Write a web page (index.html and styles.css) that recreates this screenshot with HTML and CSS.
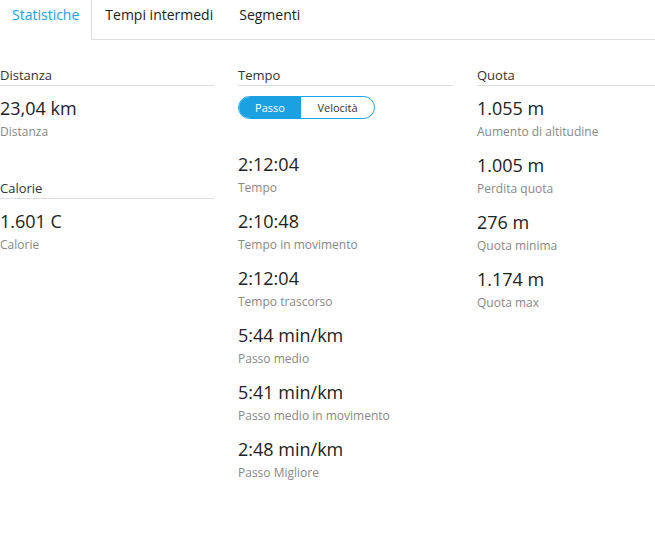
FILE: index.html
```html
<!DOCTYPE html>
<html lang="it">

<head>
    <meta charset="UTF-8">
    <title>Statistiche</title>
    <link rel="stylesheet" href="styles.css">
</head>

<body>
    <div id="tabs">
        <a href="javascript:void(0);" class="active">Statistiche</a>
        <a href="javascript:void(0);">Tempi intermedi</a>
        <a href="javascript:void(0);">Segmenti</a>
        <span class="rest"></span>
    </div>
    <div id="stats">
        <div class="col">
            <div class="group">
                <h3>Distanza</h3>
                <div class="item"><strong>23,04 km</strong><span>Distanza</span></div>
            </div>
            <div class="group">
                <h3>Calorie</h3>
                <div class="item"><strong>1.601 C</strong><span>Calorie</span></div>
            </div>
        </div>
        <div class="col">
            <div class="group">
                <h3>Tempo</h3>
                <div class="toggle">
                    <a href="javascript:void(0);" class="on">Passo</a>
                    <a href="javascript:void(0);">Velocità</a>
                </div>
                <div class="item"><strong>2:12:04</strong><span>Tempo</span></div>
                <div class="item"><strong>2:10:48</strong><span>Tempo in movimento</span></div>
                <div class="item"><strong>2:12:04</strong><span>Tempo trascorso</span></div>
                <div class="item"><strong>5:44 min/km</strong><span>Passo medio</span></div>
                <div class="item"><strong>5:41 min/km</strong><span>Passo medio in movimento</span></div>
                <div class="item"><strong>2:48 min/km</strong><span>Passo Migliore</span></div>
            </div>
        </div>
        <div class="col">
            <div class="group">
                <h3>Quota</h3>
                <div class="item"><strong>1.055 m</strong><span>Aumento di altitudine</span></div>
                <div class="item"><strong>1.005 m</strong><span>Perdita quota</span></div>
                <div class="item"><strong>276 m</strong><span>Quota minima</span></div>
                <div class="item"><strong>1.174 m</strong><span>Quota max</span></div>
            </div>
        </div>
    </div>
</body>

</html>
```
FILE: styles.css
```css
* {
    margin: 0;
    padding: 0;
    font-family: 'Open Sans', 'Liberation Sans', sans-serif;
}

body {
    background: #fff;
    color: #222;
    overflow: hidden;
}

a {
    text-decoration: none;
}

#tabs {
    display: flex;
    height: 40px;
}

#tabs a {
    display: block;
    padding: 5px 13px 0;
    font-size: 14px;
    line-height: 20px;
    color: #222;
    border-bottom: 1px solid #ddd;
}

#tabs a.active {
    padding: 5px 12px 0;
    color: #1ba1e2;
    border-right: 1px solid #ddd;
    border-bottom: 0;
}

#tabs .rest {
    flex: 1;
    border-bottom: 1px solid #ddd;
}

#stats {
    display: flex;
    gap: 24px;
    padding-top: 26px;
}

.col {
    width: 214px;
    flex-shrink: 0;
}

.col + .col {
    width: 215px;
}

.col:last-child {
    width: auto;
    flex: 1;
}

.group {
    margin-bottom: 39px;
}

.group h3 {
    font-size: 13px;
    font-weight: normal;
    line-height: 19px;
    color: #333;
    border-bottom: 1px solid #ddd;
    margin-bottom: 10px;
}

.item {
    margin-bottom: 13px;
}

.item strong {
    display: block;
    font-size: 18px;
    font-weight: normal;
    line-height: 24px;
    color: #222;
}

.item span {
    display: block;
    margin-top: 4px;
    font-size: 12px;
    line-height: 16px;
    color: #888;
}

.toggle {
    display: flex;
    width: 135px;
    height: 21px;
    border: 1px solid #1ba1e2;
    border-radius: 12px;
    overflow: hidden;
    margin: 1px 0 33px;
}

.toggle a {
    font-size: 11px;
    line-height: 21px;
    text-align: center;
    color: #333;
}

.toggle a.on {
    width: 62px;
    background: #1ba1e2;
    color: #fff;
}

.toggle a + a {
    flex: 1;
}
```
